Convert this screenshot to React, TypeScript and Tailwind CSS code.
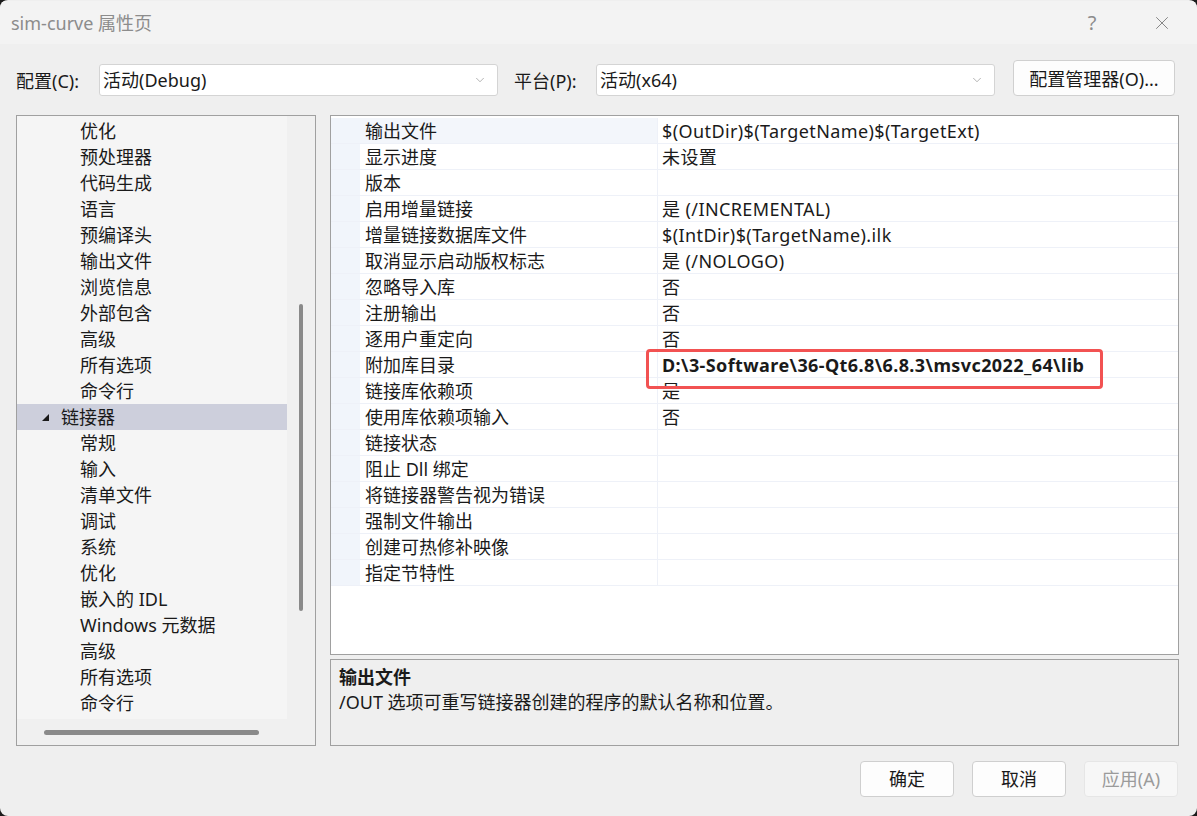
import { ChevronDown, X } from 'lucide-react';

const treeItems: { label: string; level: 'child' | 'parent'; selected?: boolean }[] = [
  { label: '优化', level: 'child' },
  { label: '预处理器', level: 'child' },
  { label: '代码生成', level: 'child' },
  { label: '语言', level: 'child' },
  { label: '预编译头', level: 'child' },
  { label: '输出文件', level: 'child' },
  { label: '浏览信息', level: 'child' },
  { label: '外部包含', level: 'child' },
  { label: '高级', level: 'child' },
  { label: '所有选项', level: 'child' },
  { label: '命令行', level: 'child' },
  { label: '链接器', level: 'parent', selected: true },
  { label: '常规', level: 'child' },
  { label: '输入', level: 'child' },
  { label: '清单文件', level: 'child' },
  { label: '调试', level: 'child' },
  { label: '系统', level: 'child' },
  { label: '优化', level: 'child' },
  { label: '嵌入的 IDL', level: 'child' },
  { label: 'Windows 元数据', level: 'child' },
  { label: '高级', level: 'child' },
  { label: '所有选项', level: 'child' },
  { label: '命令行', level: 'child' },
];

const props: [string, string][] = [
  ['输出文件', '$(OutDir)$(TargetName)$(TargetExt)'],
  ['显示进度', '未设置'],
  ['版本', ''],
  ['启用增量链接', '是 (/INCREMENTAL)'],
  ['增量链接数据库文件', '$(IntDir)$(TargetName).ilk'],
  ['取消显示启动版权标志', '是 (/NOLOGO)'],
  ['忽略导入库', '否'],
  ['注册输出', '否'],
  ['逐用户重定向', '否'],
  ['附加库目录', 'D:\\3-Software\\36-Qt6.8\\6.8.3\\msvc2022_64\\lib'],
  ['链接库依赖项', '是'],
  ['使用库依赖项输入', '否'],
  ['链接状态', ''],
  ['阻止 Dll 绑定', ''],
  ['将链接器警告视为错误', ''],
  ['强制文件输出', ''],
  ['创建可热修补映像', ''],
  ['指定节特性', ''],
];

function Combo({ value }: { value: string }) {
  return (
    <div className="flex h-[32px] w-[399px] items-center justify-between rounded-[3px] border border-[#d4d4d4] bg-white pl-[3px] pr-[10px]">
      <span>{value}</span>
      <ChevronDown className="h-[14px] w-[14px] text-[#8a8a8a]" strokeWidth={1.1} />
    </div>
  );
}

function DialogButton({ label, disabled }: { label: string; disabled?: boolean }) {
  return (
    <button
      className={
        disabled
          ? 'h-[36px] w-[94px] rounded-[4px] border border-[#e6e6e6] bg-[#f7f7f7] text-[#9b9b9b]'
          : 'h-[36px] w-[94px] rounded-[4px] border border-[#cfcfcf] bg-[#fdfdfd] text-[#1a1a1a]'
      }
    >
      {label}
    </button>
  );
}

export default function App() {
  return (
    <div className="h-[816px] w-[1197px] bg-[#1c1c1c] font-['Noto_Sans','Noto_Sans_CJK_SC',sans-serif] text-[18px] leading-none text-[#1a1a1a]">
      <div className="flex h-[816px] flex-col overflow-hidden rounded-[8px] bg-[#efefef] pt-px">
        {/* title bar */}
        <div className="flex h-[43px] items-center justify-between bg-[#f3f3f3]">
          <span className="pl-[11px] text-[#8c8c8c]">sim-curve 属性页</span>
          <div className="flex h-full items-center">
            <span className="w-[70px] text-center text-[20px] text-[#8c8c8c]">?</span>
            <span className="flex w-[70px] justify-center">
              <X className="h-[22px] w-[22px] text-[#7d7d7d]" strokeWidth={1} />
            </span>
          </div>
        </div>

        {/* config row */}
        <div className="mt-[18px] flex h-[36px] items-center pl-[16px]">
          <span className="w-[83px] pt-[2px]">配置(C):</span>
          <Combo value="活动(Debug)" />
          <span className="ml-[16px] w-[82px] pt-[2px]">平台(P):</span>
          <Combo value="活动(x64)" />
          <button className="ml-[18px] h-[36px] w-[162px] -translate-y-[2px] rounded-[4px] border border-[#d0d0d0] bg-[#fdfdfd] pt-[2px]">
            配置管理器(O)...
          </button>
        </div>

        {/* main */}
        <div className="mt-[17px] flex h-[631px] pl-[16px] pr-[18px]">
          {/* tree */}
          <div className="flex w-[300px] flex-col border border-[#a0a0a0] bg-[#f0f0f0]">
            <div className="flex flex-1">
              <div className="w-[270px] bg-[#f5f5f5] pt-[2px]">
                {treeItems.map((item, i) => (
                  <div
                    key={i}
                    className={
                      item.selected
                        ? 'flex h-[26px] items-center bg-[#cdcfdc] pl-[25px]'
                        : 'flex h-[26px] items-center pl-[63px]'
                    }
                  >
                    {item.level === 'parent' && (
                      <span className="mr-[12px] mt-[1px] block h-0 w-0 border-b-[7px] border-l-[7px] border-b-[#1a1a1a] border-l-transparent" />
                    )}
                    {item.label}
                  </div>
                ))}
              </div>
              <div className="flex flex-1 justify-center pt-[188px]">
                <div className="h-[307px] w-[4px] rounded-full bg-[#8a8a8a]" />
              </div>
            </div>
            <div className="flex h-[26px] items-center pl-[27px]">
              <div className="h-[5px] w-[215px] rounded-full bg-[#8a8a8a]" />
            </div>
          </div>

          {/* right column */}
          <div className="ml-[14px] flex flex-1 flex-col">
            <div className="relative h-[540px] border border-[#a0a0a0] bg-white pt-[2px]">
              {props.map(([name, value], i) => (
                <div key={i} className="flex h-[26px] border-b border-[#eef1f8]">
                  <div className="w-[29px] bg-[#f1f5fb]" />
                  <div
                    className={
                      i === 0
                        ? 'flex w-[298px] items-center border-r border-[#eef1f8] bg-[#f3f6fb] pl-[5px]'
                        : 'flex w-[298px] items-center border-r border-[#eef1f8] pl-[5px]'
                    }
                  >
                    {name}
                  </div>
                  <div
                    className={
                      i === 9
                        ? 'flex flex-1 items-center pl-[4px] font-bold tracking-[0.4px]'
                        : 'flex flex-1 items-center pl-[4px] tracking-[0.4px]'
                    }
                  >
                    {value}
                  </div>
                </div>
              ))}
              {/* annotation box */}
              <div className="absolute left-[315px] top-[233px] h-[40px] w-[457px] rounded-[4px] border-[3px] border-[#f25252]" />
            </div>
            <div className="mt-[4px] flex-1 border border-[#a0a0a0] bg-[#efefef] pl-[8px] pt-[8px]">
              <div className="font-bold">输出文件</div>
              <div className="mt-[7px]">/OUT 选项可重写链接器创建的程序的默认名称和位置。</div>
            </div>
          </div>
        </div>

        {/* buttons */}
        <div className="mt-[15px] flex justify-end gap-[18px] pr-[19px]">
          <DialogButton label="确定" />
          <DialogButton label="取消" />
          <DialogButton label="应用(A)" disabled />
        </div>
      </div>
    </div>
  );
}
